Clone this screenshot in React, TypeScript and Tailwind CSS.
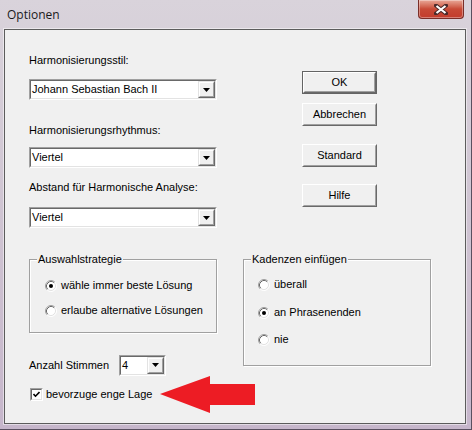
import React from 'react';

// Classic Windows "Optionen" dialog inside an Aero frame

function Combo({ value, width }: { value: string; width: string }) {
  return (
    <div className={`flex h-[21px] ${width} border border-t-[#a0a0a0] border-l-[#a0a0a0] border-b-white border-r-white`}>
      <div className="flex flex-1 border border-t-[#696969] border-l-[#696969] border-b-[#e3e3e3] border-r-[#e3e3e3] bg-white">
        <div className="flex-1 pl-[1px] leading-[17px] whitespace-nowrap overflow-hidden">{value}</div>
        <div className="flex w-[17px] border border-t-[#e3e3e3] border-l-[#e3e3e3] border-b-[#696969] border-r-[#696969]">
          <div className="flex flex-1 items-center justify-center bg-[#f0f0f0] border border-t-white border-l-white border-b-[#a0a0a0] border-r-[#a0a0a0]">
            <svg width="7" height="4" viewBox="0 0 7 4">
              <polygon points="0,0 7,0 3.5,4" fill="#000" />
            </svg>
          </div>
        </div>
      </div>
    </div>
  );
}

function Button({ label, isDefault }: { label: string; isDefault?: boolean }) {
  return (
    <div className={`flex h-[23px] w-[75px] ${isDefault ? 'border border-[#646464]' : ''}`}>
      <div className="flex flex-1 border border-t-white border-l-white border-b-[#696969] border-r-[#696969]">
        <div className="flex flex-1 items-center justify-center bg-[#f0f0f0] border border-t-[#f0f0f0] border-l-[#f0f0f0] border-b-[#a0a0a0] border-r-[#a0a0a0]">
          {label}
        </div>
      </div>
    </div>
  );
}

function Radio({ label, checked }: { label: string; checked?: boolean }) {
  return (
    <div className="flex items-center h-[13px] gap-[4px]">
      <svg width="12" height="12" viewBox="0 0 12 12">
        <circle cx="6" cy="6" r="5" fill="#fff" />
        <path d="M2.11 9.89 A5.5 5.5 0 0 1 9.89 2.11" fill="none" stroke="#a0a0a0" />
        <path d="M9.89 2.11 A5.5 5.5 0 0 1 2.11 9.89" fill="none" stroke="#fff" />
        <path d="M2.82 9.18 A4.5 4.5 0 0 1 9.18 2.82" fill="none" stroke="#696969" />
        <path d="M9.18 2.82 A4.5 4.5 0 0 1 2.82 9.18" fill="none" stroke="#e3e3e3" />
        {checked && <circle cx="6" cy="6" r="2" fill="#000" />}
      </svg>
      <span className="leading-[13px] whitespace-nowrap">{label}</span>
    </div>
  );
}

function GroupBox({ title, className, children }: { title: string; className: string; children: React.ReactNode }) {
  return (
    <div className={`relative border border-[#a0a0a0] shadow-[inset_1px_1px_0_#fff,1px_1px_0_#fff] ${className}`}>
      <span className="absolute left-[7px] -top-[7px] px-[1px] bg-[#f0f0f0] leading-[13px] whitespace-nowrap">{title}</span>
      {children}
    </div>
  );
}

export default function App() {
  return (
    <div className="relative w-[472px] h-[430px] overflow-hidden bg-gradient-to-b from-[#d9d3db] via-[#cfc4d2] to-[#c6b6cb] border-r border-b border-[#5a5060]">
      {/* Title bar */}
      <div className="flex h-[29px] items-start justify-between">
        <div className="pl-[7px] pt-[7px] text-[12px] leading-[15px] text-[#1a1a1a] font-['Open_Sans','Noto_Sans',sans-serif]">
          Optionen
        </div>
        <div className="mr-[7px] flex h-[19px] w-[46px] items-center justify-center rounded-b-[4px] border border-t-0 border-[#7a2e28] bg-gradient-to-b from-[#e8a898] via-[#c84a36] to-[#c23c2c] shadow-[inset_0_0_0_1px_rgba(255,255,255,0.35)]">
          <svg width="14" height="11" viewBox="0 0 14 11">
            <path d="M2 1.5 L12 9.5 M12 1.5 L2 9.5" stroke="#4a2a2a" strokeWidth="4" strokeLinecap="square" />
            <path d="M2.5 2 L11.5 9 M11.5 2 L2.5 9" stroke="#fff" strokeWidth="2.2" />
          </svg>
        </div>
      </div>

      {/* Client area */}
      <div className="ml-[4px] h-[395px] w-[462px] border border-[#5c5c5c] bg-[#f0f0f0] text-[11px] text-black font-['Liberation_Sans',Arial,sans-serif] shadow-[0_0_0_1px_rgba(255,255,255,0.5)]">
        <div className="flex">
          <div className="ml-[24px] flex w-[188px] flex-col">
            <div className="mt-[24px] leading-[13px]">Harmonisierungsstil:</div>
            <div className="mt-[12px]">
              <Combo value="Johann Sebastian Bach II" width="w-[188px]" />
            </div>
            <div className="mt-[24px] leading-[13px]">Harmonisierungsrhythmus:</div>
            <div className="mt-[10px]">
              <Combo value="Viertel" width="w-[188px]" />
            </div>
            <div className="mt-[13px] leading-[13px]">Abstand für Harmonische Analyse:</div>
            <div className="mt-[13px]">
              <Combo value="Viertel" width="w-[188px]" />
            </div>
          </div>
          <div className="ml-[85px] flex flex-col">
            <div className="mt-[41px]"><Button label="OK" isDefault /></div>
            <div className="mt-[9px]"><Button label="Abbrechen" /></div>
            <div className="mt-[18px]"><Button label="Standard" /></div>
            <div className="mt-[17px]"><Button label="Hilfe" /></div>
          </div>
        </div>

        <div className="mt-[31px] flex items-start">
          <div className="ml-[24px] flex w-[188px] flex-col">
            <GroupBox title="Auswahlstrategie" className="h-[74px] pl-[15px] pt-[19px] flex flex-col gap-[12px]">
              <Radio label="wähle immer beste Lösung" checked />
              <Radio label="erlaube alternative Lösungen" />
            </GroupBox>
            <div className="mt-[22px] flex items-center h-[20px]">
              <span className="w-[90px] leading-[13px]">Anzahl Stimmen</span>
              <Combo value="4" width="w-[47px]" />
            </div>
            <div className="relative mt-[13px] flex items-center h-[13px]">
              <div className="ml-[1px] flex h-[13px] w-[13px] border border-t-[#a0a0a0] border-l-[#a0a0a0] border-b-white border-r-white">
                <div className="flex flex-1 items-center justify-center bg-white border border-t-[#696969] border-l-[#696969] border-b-[#e3e3e3] border-r-[#e3e3e3]">
                  <svg width="7" height="7" viewBox="0 0 7 7">
                    <path d="M0.5 3 L2.5 5.2 L6.5 1" fill="none" stroke="#000" strokeWidth="1.6" />
                  </svg>
                </div>
              </div>
              <span className="ml-[3px] leading-[13px] whitespace-nowrap">bevorzuge enge Lage</span>
              {/* red annotation arrow */}
              <svg className="absolute left-[131px] -top-[12px]" width="96" height="38" viewBox="0 0 96 38">
                <polygon points="0,18 50,0 50,8 95,8 95,29 50,29 50,37" fill="#ed1c24" />
              </svg>
            </div>
          </div>
          <GroupBox title="Kadenzen einfügen" className="ml-[26px] h-[107px] w-[188px] pl-[14px] pt-[18px] flex flex-col">
            <Radio label="überall" />
            <div className="mt-[15px]"><Radio label="an Phrasenenden" checked /></div>
            <div className="mt-[14px]"><Radio label="nie" /></div>
          </GroupBox>
        </div>
      </div>
    </div>
  );
}
